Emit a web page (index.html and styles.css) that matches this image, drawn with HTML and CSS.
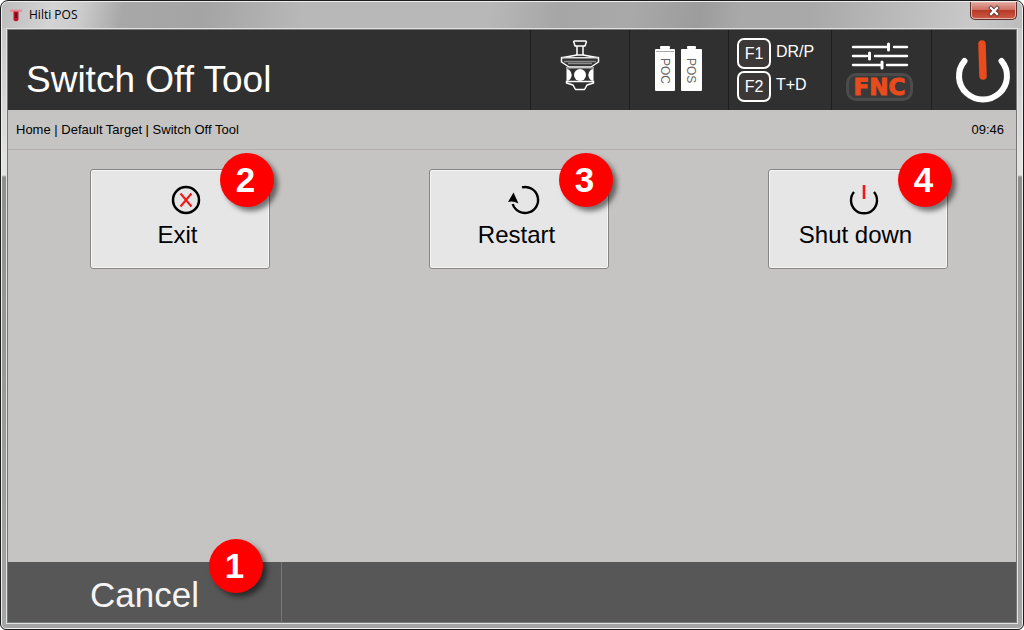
FILE: index.html
```html
<!DOCTYPE html>
<html lang="en">
<head>
<meta charset="utf-8">
<meta name="viewport" content="width=device-width, initial-scale=1">
<title>Hilti POS</title>
<link rel="stylesheet" href="styles.css">
</head>
<body>
<div class="window">
  <div class="titlebar">
    <svg class="app-icon" viewBox="0 0 14 14" aria-hidden="true">
      <path d="M1 1.500H13V4H1Z" fill="#e58f96"/>
      <path d="M4.500 3.500H9.500V12Q7 14.500 4.500 12Z" fill="#c01028"/>
      <path d="M6 5H8V10H6Z" fill="#6d0a18"/>
    </svg>
    <span class="app-name">Hilti POS</span>
    <button class="close" type="button" aria-label="Close">
      <svg viewBox="0 0 12 10" width="12" height="10" aria-hidden="true">
        <path d="M3 2L9 8M9 2L3 8" stroke="#5b2a26" stroke-width="4" stroke-linecap="square"/>
        <path d="M3 2L9 8M9 2L3 8" stroke="#fff" stroke-width="2.400" stroke-linecap="square"/>
      </svg>
    </button>
  </div>
  <div class="client">
    <header class="header">
      <h1 class="title">Switch Off Tool</h1>
      <button class="tool" type="button" aria-label="Prism">
        <svg viewBox="0 0 98 80" width="98" height="80" fill="none" stroke="#fff" stroke-width="1.500" stroke-linejoin="round" aria-hidden="true">
          <path d="M43 12.500Q42 11.500 43.500 11H54.500Q56 11.500 55 13L54 16H44Z"/>
          <path d="M46 16V25M52 16V25"/>
          <path d="M46 25H52L66 27.500H67.500V32L60 37H38L30.500 32V27.500H32Z"/>
          <path d="M31 27.700H67" stroke="#ddd"/>
          <path d="M33 31.500H65M37 33.500H61" stroke="#8b8b8b"/>
          <path d="M36 37V52M62 37V52" stroke-width="1"/>
          <path d="M37 38H61" stroke="#bbb" stroke-width="1"/>
          <path d="M35.500 51.500H62.500V53L56 55L53.500 59.500H44.500L42 55L35.500 53Z"/>
          <path d="M36 39.500H38Q43.500 45 38 50.500H36ZM62 39.500H60Q54.500 45 60 50.500H62Z" fill="#fff" stroke="none"/>
          <circle cx="49" cy="45" r="6" fill="#fff" stroke="none"/>
        </svg>
      </button>
      <button class="tool" type="button" aria-label="Battery status">
        <svg viewBox="0 0 98 80" width="98" height="80" fill="#fff" aria-hidden="true">
          <rect x="30" y="16" width="10" height="3" rx="1"/>
          <rect x="25" y="19" width="20" height="42" rx="1"/>
          <path d="M26 21.500H44" stroke="#aaa"/>
          <rect x="57" y="16" width="9" height="3" rx="1"/>
          <rect x="51" y="19" width="21" height="42" rx="1"/>
          <text transform="translate(31 28) rotate(90)" class="cell-text">POC</text>
          <text transform="translate(57 28) rotate(90)" class="cell-text">POS</text>
        </svg>
      </button>
      <div class="tool keys">
        <button class="key" type="button">F1</button><span class="key-label">DR/P</span>
        <button class="key" type="button">F2</button><span class="key-label">T+D</span>
      </div>
      <button class="tool fnc" type="button">
        <svg viewBox="0 0 58 28" width="58" height="28" stroke="#fff" stroke-width="2.400" stroke-linecap="round" aria-hidden="true">
          <path d="M2 5H36M43 5H56M2 14H16M24 14H56M2 23H29M36 23H56"/>
          <path d="M37.500 2V8M18.500 11V17M31 20V26" stroke-width="3"/>
        </svg>
        <span class="fnc-label">FNC</span>
      </button>
      <button class="tool power" type="button" aria-label="Switch off">
        <svg viewBox="0 0 60 66" width="60" height="66" fill="none" stroke-linecap="round" aria-hidden="true">
          <path d="M13.500 23A24 23.500 0 1 0 50.500 23" stroke="#fff" stroke-width="6"/>
          <path d="M31 6L32 38" stroke="#e84b1c" stroke-width="7.500"/>
        </svg>
      </button>
    </header>
    <div class="status">
      <nav class="crumbs" aria-label="Breadcrumb">
        <a href="#home">Home</a> | <a href="#target">Default Target</a> | <a href="#off">Switch Off Tool</a>
      </nav>
      <time class="clock">09:46</time>
    </div>
    <main class="actions">
      <div class="action">
        <button class="action-button" type="button">
          <svg class="action-icon" viewBox="0 0 32 32" fill="none" aria-hidden="true">
            <circle cx="16" cy="16" r="13" stroke="#000" stroke-width="2.500"/>
            <path d="M10.500 9.500L21.500 22.500M21.500 9.500L10.500 22.500" stroke="#f01818" stroke-width="2"/>
          </svg>
          Exit
        </button>
        <span class="badge">2</span>
      </div>
      <div class="action">
        <button class="action-button" type="button">
          <svg class="action-icon" viewBox="0 0 32 32" fill="none" aria-hidden="true">
            <path d="M13 3.350A13 13 0 1 1 3.700 20" stroke="#000" stroke-width="2.400"/>
            <path d="M4.500 8.500L9.500 19.500Q4 16.500 -1 18Z" fill="#000"/>
          </svg>
          Restart
        </button>
        <span class="badge">3</span>
      </div>
      <div class="action">
        <button class="action-button" type="button">
          <svg class="action-icon" viewBox="0 0 32 32" fill="none" aria-hidden="true">
            <path d="M6 8A13 13 0 1 0 26 8" stroke="#000" stroke-width="2.400"/>
            <path d="M16 1V15" stroke="#f01818" stroke-width="2.600"/>
          </svg>
          Shut down
        </button>
        <span class="badge">4</span>
      </div>
    </main>
    <footer class="footer">
      <button class="cancel" type="button">Cancel</button>
      <span class="badge badge-cancel">1</span>
    </footer>
  </div>
</div>
</body>
</html>
```
FILE: styles.css
```css
* { box-sizing: border-box; }

body {
  margin: 0;
  background: #fff;
  font-family: "Liberation Sans", Arial, sans-serif;
}

button {
  margin: 0;
  padding: 0;
  border: 0;
  background: none;
  color: inherit;
  font: inherit;
}

a { color: inherit; text-decoration: none; }
svg { display: block; overflow: visible; }

.window {
  display: flex;
  flex-direction: column;
  min-height: 100vh;
  padding: 0 5px 5px;
  border: 1px solid #1c1c1c;
  border-radius: 8px 8px 6px 6px;
  background: linear-gradient(#c9c9c9 0, #c9c9c9 30px, #e4e4e4 174px, #8f8f8f 176px, #a5a5a5 100%);
  box-shadow: inset 0 0 0 1px #eee;
}

.titlebar {
  display: flex;
  align-items: center;
  height: 26px;
  margin: 1px -4px 0;
  padding-left: 7px;
  border-radius: 6px 6px 0 0;
  background: linear-gradient(100deg, #bdbdbd, #d4d4d4 50px, #cbcbcb 80px, #a8a8a8 120px, #a4a4a4 200px, #b8b8b8 300px, #b8b8b8 480px, #a6a6a6 550px, #a9a9a9 620px, #9c9c9c 690px, #a9a9a9 730px, #a9a9a9 800px, #c9c9c9 960px, #bcbcbc);
}

.app-icon { width: 14px; height: 14px; }

.app-name {
  margin-left: 6px;
  font: 12px/16px "Open Sans", "Noto Sans", sans-serif;
}

.close {
  display: grid;
  place-items: center;
  align-self: flex-start;
  width: 47px;
  height: 18px;
  margin: 0 5px 0 auto;
  border: 1px solid #5c302c;
  border-top: 0;
  border-radius: 0 0 5px 5px;
  background: linear-gradient(#e3a99f, #cf7264 45%, #b83a28 50%, #cc5b45);
  box-shadow: inset 0 0 0 1px #e6b2a8;
}

.client {
  display: flex;
  flex: 1;
  flex-direction: column;
  border: 1px solid #dfe3e3;
  outline: 1px solid #777;
  outline-offset: -2px;
  padding: 1px;
  background: #c6c4c2;
}

.header {
  display: flex;
  height: 80px;
  background: #303030;
  color: #fff;
}

.title {
  flex: 1;
  align-self: flex-end;
  margin: 0;
  padding: 0 0 8px 18px;
  font-size: 37px;
  font-weight: 400;
  line-height: 44px;
}

.tool {
  flex: 0 0 99px;
  border-left: 1px solid #1e1e1e;
}

.cell-text {
  fill: #666;
  font-size: 12px;
}

.keys {
  display: grid;
  flex-basis: 103px;
  grid-template-columns: 34px auto;
  grid-template-rows: 31px 31px;
  align-content: center;
  column-gap: 5px;
  row-gap: 2px;
  padding-left: 8px;
  font-size: 16px;
}

.key {
  border: 2px solid #fff;
  border-radius: 7px;
  background: #3c3838;
}

.key-label { line-height: 27px; }

.fnc {
  display: flex;
  flex-basis: 100px;
  flex-direction: column;
  align-items: center;
  padding: 12px 4px 0 0;
}

.fnc-label {
  width: 67px;
  margin-top: 3px;
  border: 3px solid #4b4b4b;
  border-radius: 10px;
  background: #3a3a3a;
  color: #e84b1c;
  font: 700 23px/22px "DejaVu Sans", sans-serif;
  -webkit-text-stroke: 1px #e84b1c;
}

.power {
  display: flex;
  flex-basis: 85px;
  justify-content: flex-end;
  align-items: flex-start;
  padding: 8px 5px 0 0;
}

.status {
  display: flex;
  justify-content: space-between;
  height: 40px;
  padding: 0 12px 0 8px;
  border-bottom: 1px solid #b8aead;
  font-size: 13px;
  line-height: 39px;
}

.actions {
  display: flex;
  flex: 1;
  justify-content: space-between;
  align-items: flex-start;
  padding: 19px 68px 19px 82px;
}

.action { position: relative; }

.action-button {
  display: flex;
  flex-direction: column;
  align-items: center;
  width: 180px;
  height: 100px;
  padding: 14px 5px 0 0;
  border: 1px solid #868686;
  border-radius: 3px;
  background: #e6e6e6;
  box-shadow: inset 0 0 0 1px #f6f6f6;
  font-size: 24px;
  line-height: 36px;
}

.action-icon {
  width: 32px;
  height: 32px;
  margin: 0 0 1px 16px;
}

.badge {
  position: absolute;
  top: -16px;
  left: 130px;
  width: 54px;
  height: 54px;
  padding-right: 3px;
  border-radius: 50%;
  background: #f00;
  box-shadow: 4px 4px 5px rgba(0, 0, 0, 0.5);
  color: #fff;
  font-size: 35px;
  font-weight: 700;
  line-height: 54px;
  text-align: center;
}

.footer {
  position: relative;
  display: flex;
  height: 60px;
  background: #575757;
}

.cancel {
  width: 274px;
  padding-top: 6px;
  border-right: 1px solid #777;
  color: #f4f4f4;
  font-size: 35px;
}

.badge-cancel { top: -23px; left: 201px; }
```
